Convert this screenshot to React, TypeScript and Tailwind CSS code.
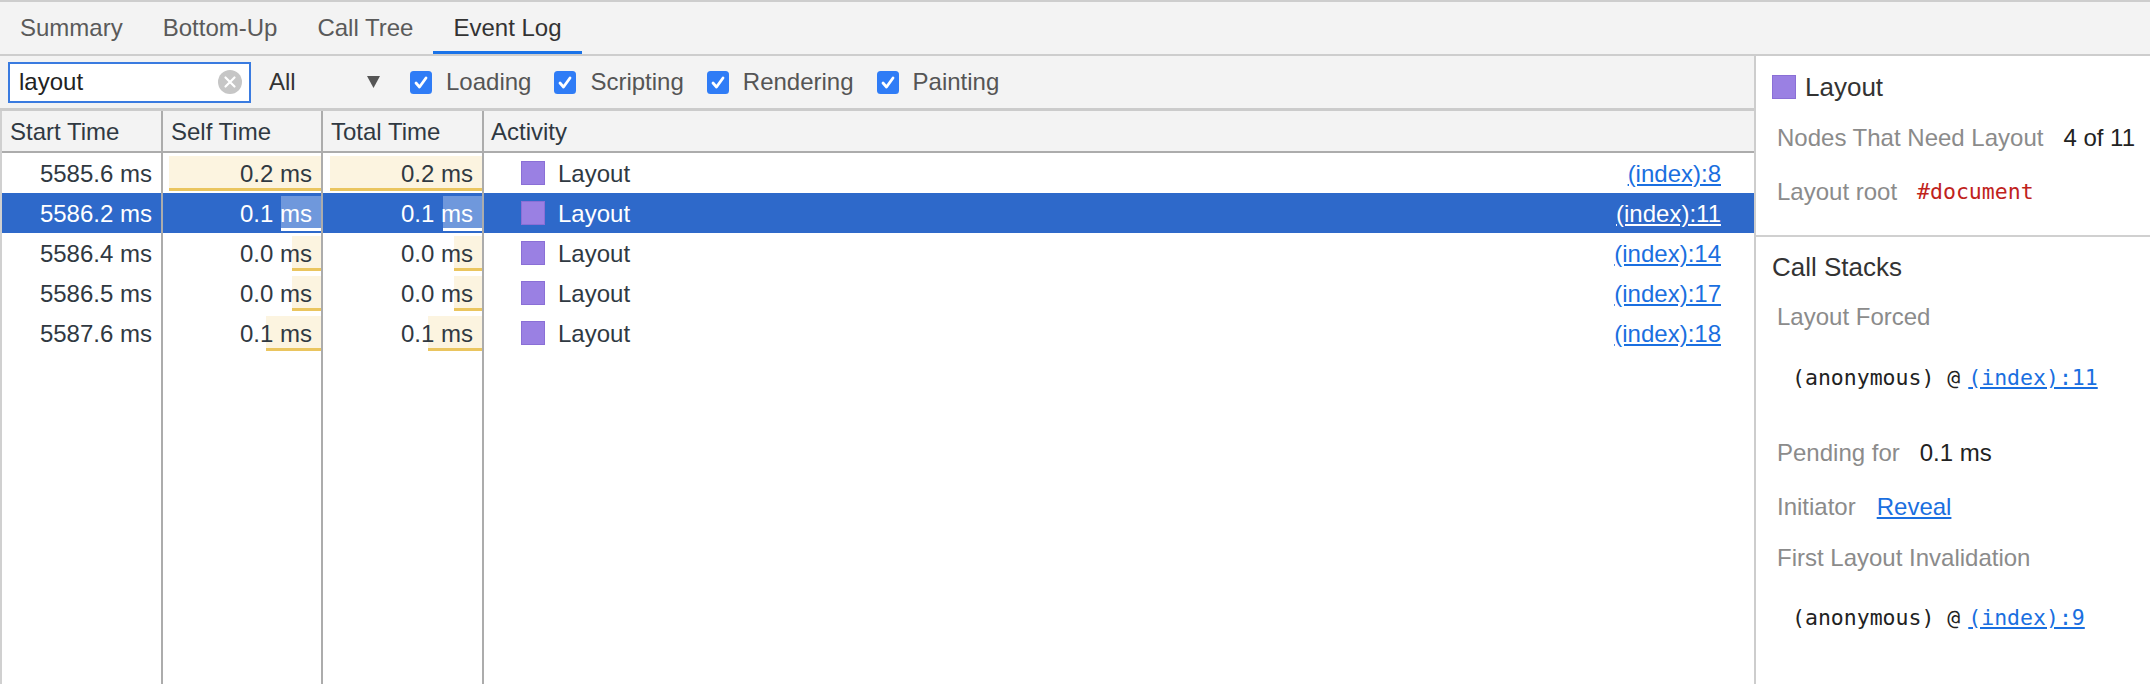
import React from 'react';

type Row = {
  start: string;
  self: string;
  selfBar: number;
  total: string;
  totalBar: number;
  link: string;
  selected?: boolean;
};

const ROWS: Row[] = [
  { start: '5585.6 ms', self: '0.2 ms', selfBar: 152, total: '0.2 ms', totalBar: 152, link: '(index):8' },
  { start: '5586.2 ms', self: '0.1 ms', selfBar: 40, total: '0.1 ms', totalBar: 39, link: '(index):11', selected: true },
  { start: '5586.4 ms', self: '0.0 ms', selfBar: 29, total: '0.0 ms', totalBar: 28, link: '(index):14' },
  { start: '5586.5 ms', self: '0.0 ms', selfBar: 29, total: '0.0 ms', totalBar: 28, link: '(index):17' },
  { start: '5587.6 ms', self: '0.1 ms', selfBar: 55, total: '0.1 ms', totalBar: 54, link: '(index):18' },
];

const TABS = ['Summary', 'Bottom-Up', 'Call Tree', 'Event Log'];

function Checkbox() {
  return (
    <svg width="22" height="23" viewBox="0 0 22 23" className="shrink-0">
      <rect x="0" y="0" width="22" height="23" rx="3.5" fill="#2f7cf6" />
      <path d="M6 12 L9.5 16 L16 7" fill="none" stroke="#fff" strokeWidth="2.8" strokeLinecap="round" strokeLinejoin="round" />
    </svg>
  );
}

function Swatch() {
  return <span className="w-[24px] h-[24px] shrink-0 bg-[#9a80e3] border border-[#8a6fd6]" />;
}

function TabBar() {
  return (
    <div className="h-[56px] shrink-0 flex bg-[#f3f3f3] border-t-2 border-b-2 border-[#cdcdcd]">
      {TABS.map((t) => {
        const active = t === 'Event Log';
        return (
          <div
            key={t}
            className={
              'relative h-full flex items-center px-[20px] ' + (active ? 'text-[#333333]' : 'text-[#5a5a5a]')
            }
          >
            {t}
            {active && <span className="absolute left-0 right-0 bottom-0 h-[3px] bg-[#1a73e8]" />}
          </div>
        );
      })}
    </div>
  );
}

function Toolbar() {
  return (
    <div className="h-[55px] shrink-0 flex items-center bg-[#f3f3f3] border-b-[3px] border-[#cbcbcb] pl-[8px]">
      {/* search */}
      <div className="w-[243px] h-[41px] flex items-center bg-white border-2 border-[#3a7be0] pl-[9px] pr-[7px]">
        <span className="flex-1 text-[#222222]">layout</span>
        <svg width="24" height="24" viewBox="0 0 24 24">
          <circle cx="12" cy="12" r="12" fill="#c6c6c6" />
          <path d="M7.5 7.5 L16.5 16.5 M16.5 7.5 L7.5 16.5" stroke="#fff" strokeWidth="2.2" strokeLinecap="round" />
        </svg>
      </div>
      {/* select */}
      <div className="ml-[18px] w-[112px] flex items-center justify-between text-[#333333]">
        <span>All</span>
        <svg width="13" height="12" viewBox="0 0 13 12" className="mr-[1px]">
          <path d="M0 0 L13 0 L6.5 12 Z" fill="#555555" />
        </svg>
      </div>
      <div className="ml-[29px] flex items-center gap-[23px] text-[#555555]">
        {['Loading', 'Scripting', 'Rendering', 'Painting'].map((l) => (
          <label key={l} className="flex items-center gap-[14px]">
            <Checkbox />
            <span>{l}</span>
          </label>
        ))}
      </div>
    </div>
  );
}

function TimeCell({ text, bar, width, selected }: { text: string; bar: number; width: string; selected?: boolean }) {
  return (
    <div className={'relative h-full flex items-center justify-end pr-[9px] pt-[2px] border-r-2 border-[#acacac] shrink-0 ' + width}>
      <span
        className={
          'absolute right-0 top-[3px] bottom-[2px] border-b-[3px] ' +
          (selected ? 'bg-[#6f98dc] border-white' : 'bg-[#fcf4e0] border-[#eac55f]')
        }
        style={{ width: bar }}
      />
      <span className="relative">{text}</span>
    </div>
  );
}

function EventTable() {
  return (
    <div className="flex-1 flex flex-col border-l-2 border-[#d0d0d0] bg-white text-[#303942]">
      {/* header */}
      <div className="h-[42px] shrink-0 flex bg-[#f3f3f3] border-b-2 border-[#acacac]">
        <div className="w-[161px] shrink-0 flex items-center pl-[8px] pt-[2px] border-r-2 border-[#acacac]">Start Time</div>
        <div className="w-[160px] shrink-0 flex items-center pl-[8px] pt-[2px] border-r-2 border-[#acacac]">Self Time</div>
        <div className="w-[161px] shrink-0 flex items-center pl-[8px] pt-[2px] border-r-2 border-[#acacac]">Total Time</div>
        <div className="flex-1 flex items-center pl-[7px] pt-[2px]">Activity</div>
      </div>
      {ROWS.map((r) => (
        <div
          key={r.start}
          className={'h-[40px] shrink-0 flex ' + (r.selected ? 'bg-[#2e69ca] text-white' : '')}
        >
          <div className="w-[161px] shrink-0 h-full flex items-center justify-end pr-[9px] pt-[2px] border-r-2 border-[#acacac]">
            {r.start}
          </div>
          <TimeCell text={r.self} bar={r.selfBar} width="w-[160px]" selected={r.selected} />
          <TimeCell text={r.total} bar={r.totalBar} width="w-[161px]" selected={r.selected} />
          <div className="flex-1 h-full flex items-center pl-[37px] pr-[33px]">
            <Swatch />
            <span className="ml-[13px] pt-[2px]">Layout</span>
            <span className={'ml-auto pt-[2px] underline ' + (r.selected ? 'text-white' : 'text-[#1a6fe0]')}>{r.link}</span>
          </div>
        </div>
      ))}
      {/* filler keeps column lines to the bottom */}
      <div className="flex-1 flex">
        <div className="w-[161px] shrink-0 border-r-2 border-[#acacac]" />
        <div className="w-[160px] shrink-0 border-r-2 border-[#acacac]" />
        <div className="w-[161px] shrink-0 border-r-2 border-[#acacac]" />
        <div className="flex-1" />
      </div>
    </div>
  );
}

const mono = "font-['DejaVu_Sans_Mono','Liberation_Mono',monospace] text-[21.5px]";

function StackLine({ link }: { link: string }) {
  return (
    <div className="h-[40px] flex items-center text-[#222222]">
      <span className={mono}>(anonymous) @</span>
      <span className="w-[8px]" />
      <span className={mono + ' text-[#1a6fe0] underline'}>{link}</span>
    </div>
  );
}

function Details() {
  return (
    <div className="w-[396px] shrink-0 bg-white border-l-2 border-[#cdcdcd] flex flex-col">
      <div className="border-b-2 border-[#d0d0d0] pb-[16px]">
        <div className="h-[55px] pt-[7px] pl-[16px] flex items-center text-[26px] text-[#333333]">
          <Swatch />
          <span className="ml-[9px]">Layout</span>
        </div>
        <div className="h-[54px] pl-[21px] flex items-center gap-[20px]">
          <span className="text-[#8b8b8b]">Nodes That Need Layout</span>
          <span className="text-[#222222]">4 of 11</span>
        </div>
        <div className="h-[54px] pl-[21px] flex items-center gap-[20px]">
          <span className="text-[#8b8b8b]">Layout root</span>
          <span className={mono + ' text-[#c0231c]'}>#document</span>
        </div>
      </div>
      <div className="h-[60px] pl-[16px] flex items-center text-[26px] text-[#333333]">Call Stacks</div>
      <div className="h-[40px] pl-[21px] flex items-center text-[#8b8b8b]">Layout Forced</div>
      <div className="pt-[21px] pb-[28px] pl-[36px]">
        <StackLine link="(index):11" />
      </div>
      <div className="h-[54px] pl-[21px] flex items-center gap-[20px]">
        <span className="text-[#8b8b8b]">Pending for</span>
        <span className="text-[#222222]">0.1 ms</span>
      </div>
      <div className="h-[54px] pl-[21px] flex items-center gap-[21px]">
        <span className="text-[#8b8b8b]">Initiator</span>
        <span className="text-[#1a6fe0] underline">Reveal</span>
      </div>
      <div className="h-[48px] pl-[21px] flex items-center text-[#8b8b8b]">First Layout Invalidation</div>
      <div className="pt-[16px] pl-[36px]">
        <StackLine link="(index):9" />
      </div>
    </div>
  );
}

export default function App() {
  return (
    <div className="w-[2150px] h-[684px] overflow-hidden flex flex-col bg-white text-[24px] font-['Liberation_Sans',Arial,sans-serif]">
      <TabBar />
      <div className="flex-1 min-h-0 flex">
        <div className="flex-1 min-w-0 flex flex-col">
          <Toolbar />
          <EventTable />
        </div>
        <Details />
      </div>
    </div>
  );
}
